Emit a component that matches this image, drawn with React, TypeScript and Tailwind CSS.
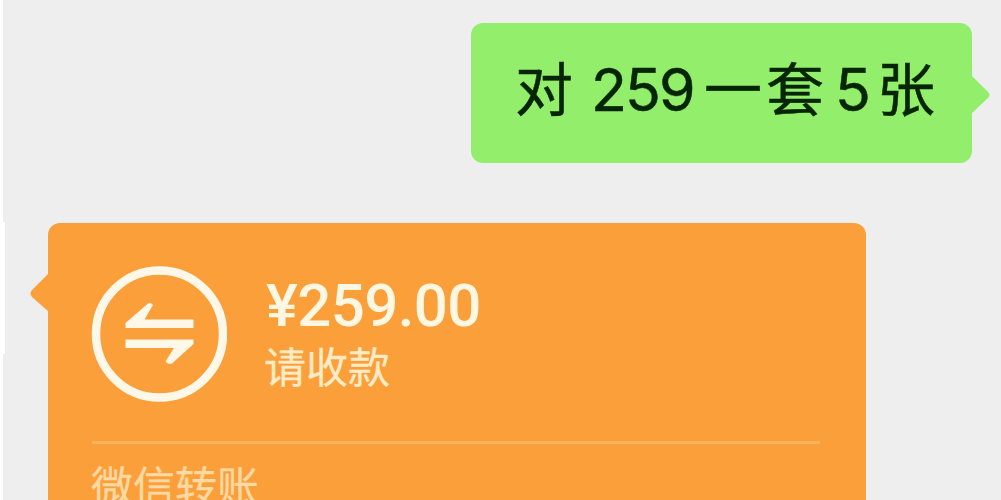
interface MessageRun {
    text: string
    className: string
}

const message: MessageRun[] = [
    { text: "对", className: "w-[56px] mr-[20px] text-[58px]" },
    { text: "259", className: "w-[113px] text-[59px] tracking-[-1.9px]" },
    { text: "一", className: "w-[62px] text-[58px]" },
    { text: "套", className: "w-[69px] text-[58px]" },
    { text: "5", className: "w-[42px] text-[59px]" },
    { text: "张", className: "w-[58px] text-[58px]" },
]

function TransferIcon() {
    return (
        <svg className="size-[136px] shrink-0" viewBox="0 0 136 136" fill="none">
            <circle cx="68.500" cy="68" r="63.5" stroke="#fff8e8" strokeWidth="8.5" />
            <path
                d="M34.500 62V57L57 37.5Q60 36 62 39L53.5 53.500H102.500V62Z"
                fill="#fff8e8"
            />
            <path
                d="M102.500 73.500V78L81 97.500Q77 99 74.500 95.500L83 82H34.500V73.500Z"
                fill="#fff8e8"
            />
        </svg>
    )
}

function SentMessage() {
    return (
        <div className="relative ml-[471px] flex h-[140px] w-[501px] rounded-xl bg-[#92ee6b] pl-[44px] pt-[25px]">
            <p className="flex h-[84px] items-baseline whitespace-nowrap font-[Inter,'Noto_Sans_CJK_SC',sans-serif] leading-[84px] text-[#062504] [-webkit-text-stroke:0.5px_#062504]">
                {message.map((run, index) => (
                    <span key={index} className={`shrink-0 ${run.className}`}>{run.text}</span>
                ))}
            </p>
            <svg className="absolute left-[500px] top-[52px] h-[40px] w-[20px]" viewBox="0 0 20 40">
                <path d="M0 0L17 17Q20 20 17 23L0 39Z" fill="#92ee6b" />
            </svg>
        </div>
    )
}

function TransferCard() {
    return (
        <div className="relative ml-[48px] mt-[60px] h-[300px] w-[818px] rounded-t-xl bg-[#fb9f3a] pt-[43px]">
            <svg className="absolute -left-[18px] top-[50px] h-[42px] w-[19px]" viewBox="0 0 19 42">
                <path d="M19 0L2 17Q-1 20.500 2 24L19 39Z" fill="#fb9f3a" />
            </svg>
            <div className="flex pl-[43px]">
                <TransferIcon />
                <div className="ml-[39px]">
                    <p className="mt-[9px] whitespace-nowrap font-[Roboto,sans-serif] text-[60px] font-medium leading-[62px] tracking-[-0.6px] text-[#fff7e2]">
                        ¥259.00
                    </p>
                    <p className="-ml-[2px] mt-[1px] whitespace-nowrap font-['Noto_Sans_CJK_SC',sans-serif] text-[42px] leading-[54px] text-[#ffebc6] [-webkit-text-stroke:0.3px_#ffebc6]">
                        请收款
                    </p>
                </div>
            </div>
            <div className="ml-[44px] mt-[39px] h-[3px] w-[728px] bg-[#fdb461]" />
            <p className="ml-[43px] mt-[13px] whitespace-nowrap font-['Noto_Sans_CJK_SC',sans-serif] text-[42px] leading-[54px] text-[#fed9a2] [-webkit-text-stroke:0.3px_#fed9a2]">
                微信转账
            </p>
        </div>
    )
}

export default function App() {
    return (
        <main className="relative h-[500px] w-[1001px] overflow-hidden border-l-[3px] border-white bg-[#eeeeee]">
            <div className="absolute left-0 top-[222px] h-[132px] w-[2px] bg-white" />
            <div className="-ml-[3px] pt-[23px]">
                <SentMessage />
                <TransferCard />
            </div>
        </main>
    )
}
